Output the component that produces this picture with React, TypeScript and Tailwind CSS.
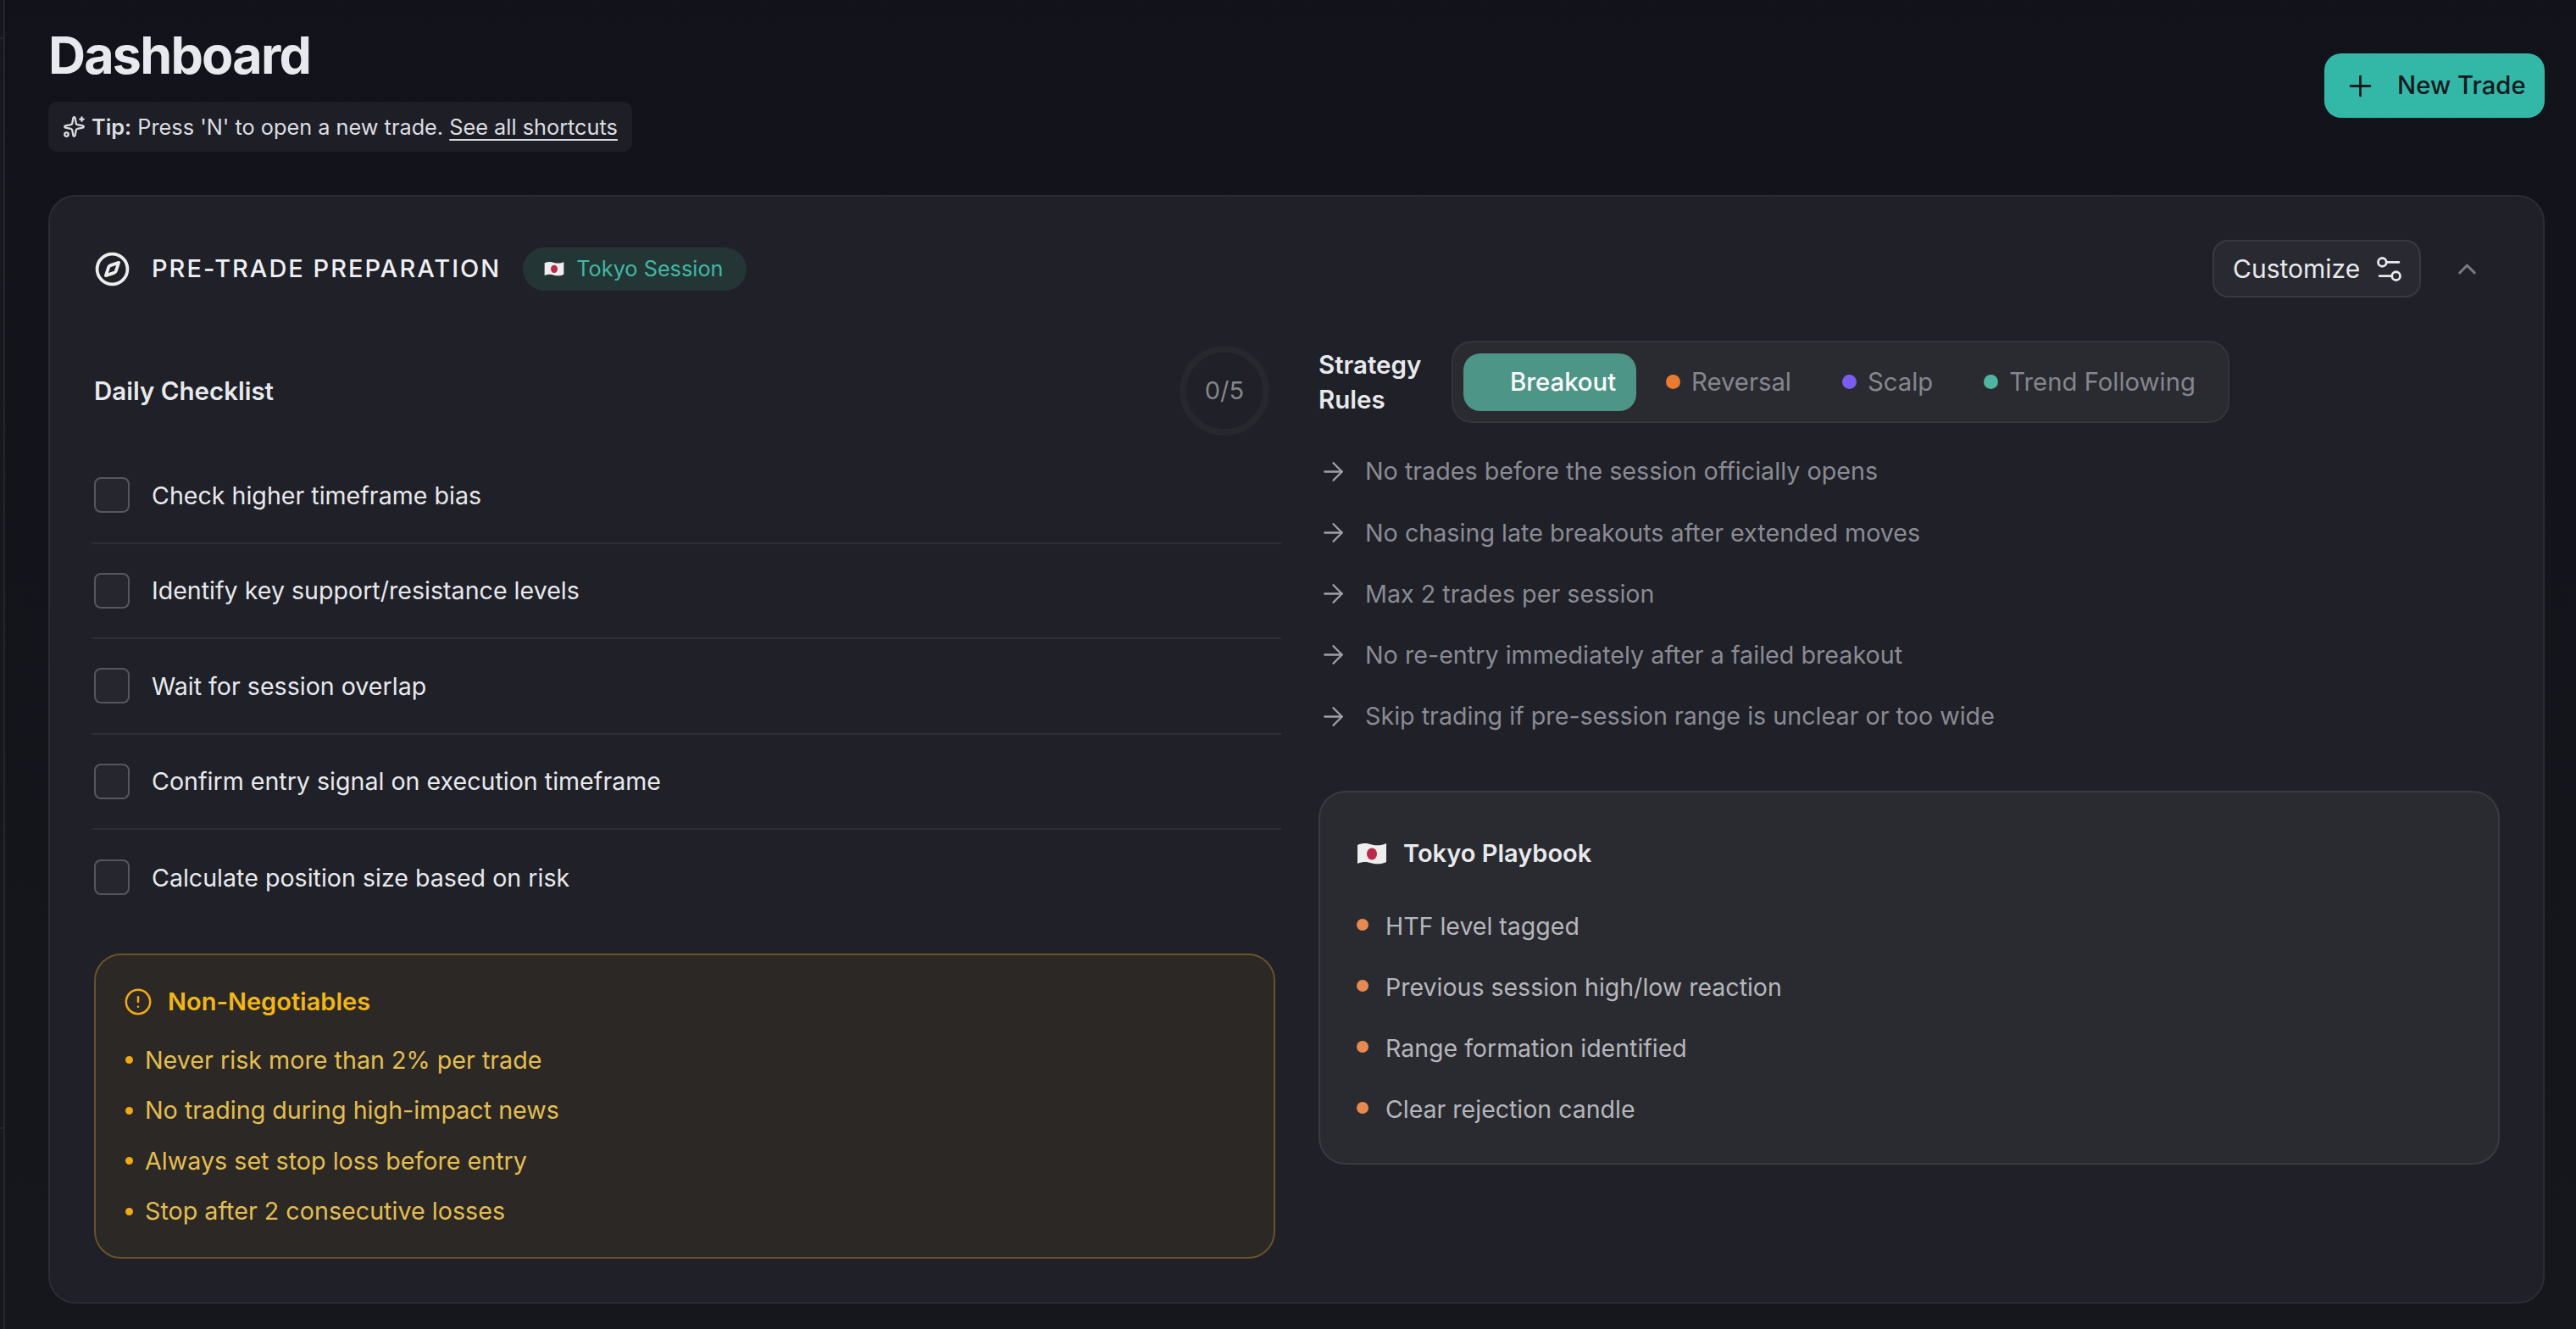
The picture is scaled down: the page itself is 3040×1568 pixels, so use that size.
import { Sparkles, Compass, Settings2, Plus, ChevronUp, ArrowRight, CircleAlert } from "lucide-react";

function Flag({ className }: { className: string }) {
  return (
    <svg viewBox="0 0 36 30" className={className}>
      <path d="M1 5 C8 2 13 3 18 4.5 C24 6 30 5.5 35 3 L35 25 C30 27.5 24 28 18 26.5 C13 25 8 24 1 27 Z" fill="#eeeeee" />
      <ellipse cx="18" cy="15.5" rx="6" ry="7" fill="#bc2a4b" />
    </svg>
  );
}

const checklist = [
  "Check higher timeframe bias",
  "Identify key support/resistance levels",
  "Wait for session overlap",
  "Confirm entry signal on execution timeframe",
  "Calculate position size based on risk",
];
const negotiables = [
  "Never risk more than 2% per trade",
  "No trading during high-impact news",
  "Always set stop loss before entry",
  "Stop after 2 consecutive losses",
];
const rules = [
  "No trades before the session officially opens",
  "No chasing late breakouts after extended moves",
  "Max 2 trades per session",
  "No re-entry immediately after a failed breakout",
  "Skip trading if pre-session range is unclear or too wide",
];
const playbook = [
  "HTF level tagged",
  "Previous session high/low reaction",
  "Range formation identified",
  "Clear rejection candle",
];

export default function App() {
  return (
    <div className="flex w-[3040px] h-[1568px] overflow-hidden bg-linear-to-b from-[#12131a] to-[#16171d] font-['Inter',sans-serif] text-[#e8e9ef]">
      <aside className="h-full w-[6px] shrink-0 border-r-2 border-[#26272d] bg-[#17181e]">
        <div className="h-[46px] border-b-2 border-[#26272d]" />
        <div className="h-[1286px] border-b-2 border-[#26272d]" />
      </aside>
      <main className="w-[3034px] pl-[51px] pr-[37px]">
        <header className="flex items-start justify-between h-[230px]">
          <div className="pt-[30px]">
            <h1 className="text-[61px] leading-[70px] font-bold tracking-[-1.8px] text-[#e8e9ef]">Dashboard</h1>
            <div className="mt-[20px] flex h-[59px] w-[689px] items-center gap-[7px] rounded-[10px] bg-[#1e1f26] pl-[17px] text-[25.3px] text-[#dcdde2]">
              <Sparkles className="w-[27px] h-[27px]" strokeWidth={2} />
              <span>
                <span className="font-semibold">Tip:</span> Press 'N' to open a new trade.{" "}
                <span className="underline underline-offset-[5px]">See all shortcuts</span>
              </span>
            </div>
          </div>
          <button className="mt-[63px] flex h-[76px] w-[260px] items-center gap-[24px] rounded-[20px] bg-[#33b8a8] pl-[23px] text-[29.3px] font-medium text-[#0f1a20]">
            <Plus className="w-[39px] h-[39px]" strokeWidth={1.7} />
            New Trade
          </button>
        </header>

        <section className="h-[1308px] rounded-[32px] border-2 border-[#2c2d33] bg-[#1f2028] pl-[52px] pr-[51px] pt-[51px]">
          <div className="flex h-[68px] items-center justify-between">
            <div className="flex items-center">
              <Compass className="w-[43px] h-[43px] text-[#eceded]" strokeWidth={2.1} />
              <h2 className="ml-[25px] text-[29px] font-medium tracking-[2px] text-[#eeeff2]">PRE-TRADE PREPARATION</h2>
              <div className="ml-[26px] flex h-[51px] w-[264px] items-center gap-[14px] rounded-full bg-[#243536] pl-[25px] text-[25.3px] text-[#3fb8a5]">
                <Flag className="w-[24px] h-[24px]" />
                Tokyo Session
              </div>
            </div>
            <div className="flex items-center">
              <button className="flex h-[68px] w-[246px] items-center gap-[15px] rounded-[18px] border-2 border-[#393a41] bg-[#292a31] pl-[22px] text-[30px] text-[#e8e9ec]">
                Customize
                <Settings2 className="w-[39px] h-[39px]" strokeWidth={1.7} />
              </button>
              <ChevronUp className="ml-[37px] mr-[21px] w-[35px] h-[35px] text-[#7a7b80]" strokeWidth={2} />
            </div>
          </div>

          <div className="mt-[51px] flex gap-[51px]">
            <div className="w-[1394px] pt-[6px]">
              <div className="flex h-[106px] items-center justify-between pr-[7px]">
                <h3 className="text-[29.5px] font-semibold text-[#e8e9ec]">Daily Checklist</h3>
                <div className="flex h-[106px] w-[106px] items-center justify-center rounded-full border-[8px] border-[#26282e] text-[29px] text-[#85868c]">
                  0/5
                </div>
              </div>
              <ul className="mt-[15px] -ml-[3px] -mr-[7px]">
                {checklist.map((t, i) => (
                  <li
                    key={t}
                    className={
                      i < 4
                        ? "flex h-[112.5px] items-center gap-[26px] border-b-2 border-[#2d2f35] pl-[3px] text-[28.6px] text-[#e8e9ec]"
                        : "flex h-[112.5px] items-center gap-[26px] pl-[3px] text-[28.6px] text-[#e8e9ec]"
                    }
                  >
                    <span className="h-[42px] w-[42px] rounded-[8px] border-2 border-[#55575c] bg-[#26272e]" />
                    <span className="pt-[2px]">{t}</span>
                  </li>
                ))}
              </ul>
              <div className="mt-[33px] h-[360px] rounded-[32px] border-2 border-[#6a5228] bg-[#2c2826] px-[35px] pt-[33px]">
                <div className="flex h-[44px] items-center gap-[18px] text-[29px] font-semibold text-[#f2b715]">
                  <CircleAlert className="-ml-[2px] w-[34px] h-[34px] text-[#f0a818]" strokeWidth={1.8} />
                  Non-Negotiables
                </div>
                <ul className="mt-[25px] flex flex-col gap-[15.5px]">
                  {negotiables.map((t) => (
                    <li key={t} className="flex h-[44px] items-center gap-[14px] text-[28.7px] text-[#e2be50]">
                      <span className="h-[9px] w-[9px] rounded-full bg-[#f0a818]" />
                      {t}
                    </li>
                  ))}
                </ul>
              </div>
            </div>

            <div className="w-[1394px]">
              <div className="flex items-center">
                <h3 className="w-[157px] text-[29.5px] leading-[41px] font-semibold text-[#e8e9ec]">
                  Strategy<br />Rules
                </h3>
                <div className="flex h-[97px] items-center gap-[10px] rounded-[24px] border-2 border-[#34353b] bg-[#2a2b31] pl-[12px] pr-[13px]">
                  <div className="flex h-[68px] w-[204px] items-center gap-[13px] rounded-[20px] bg-[#4d9587] pl-[25px] text-[29.3px] font-medium text-white">
                    <span className="h-[17px] w-[17px] rounded-full bg-[#4d9587]" />
                    <span className="pt-[1px]">Breakout</span>
                  </div>
                  {[
                    { n: "Reversal", c: "bg-[#e87b2f]" },
                    { n: "Scalp", c: "bg-[#7b5cf0]" },
                    { n: "Trend Following", c: "bg-[#4fb5a0]" },
                  ].map((s) => (
                    <div key={s.n} className="flex h-[68px] items-center gap-[13px] px-[25px] text-[29.3px] text-[#85868e]">
                      <span className={`h-[17px] w-[17px] rounded-full ${s.c}`} />
                      <span className="pt-[1px]">{s.n}</span>
                    </div>
                  ))}
                </div>
              </div>
              <ul className="mt-[35px] flex flex-col gap-[28.25px]">
                {rules.map((t) => (
                  <li key={t} className="flex h-[44px] items-center gap-[20px] text-[28.7px] text-[#8a8b93]">
                    <ArrowRight className="w-[35px] h-[35px] shrink-0 text-[#a0a1a8]" strokeWidth={1.6} />
                    {t}
                  </li>
                ))}
              </ul>
              <div className="mt-[66px] h-[441px] rounded-[32px] border-2 border-[#3a3b40] bg-[#2a2b30] px-[43px] pt-[50px]">
                <div className="flex h-[44px] items-center gap-[19px] text-[29px] font-semibold text-[#e8e9ec]">
                  <Flag className="w-[36px] h-[36px]" />
                  Tokyo Playbook
                </div>
                <ul className="mt-[42px] flex flex-col gap-[28px]">
                  {playbook.map((t) => (
                    <li key={t} className="flex h-[44px] items-center gap-[20px] text-[28.5px] text-[#b5b6bb]">
                      <span className="-mt-[5px] h-[14px] w-[14px] rounded-full bg-[#e68a50]" />
                      {t}
                    </li>
                  ))}
                </ul>
              </div>
            </div>
          </div>
        </section>
      </main>
    </div>
  );
}
